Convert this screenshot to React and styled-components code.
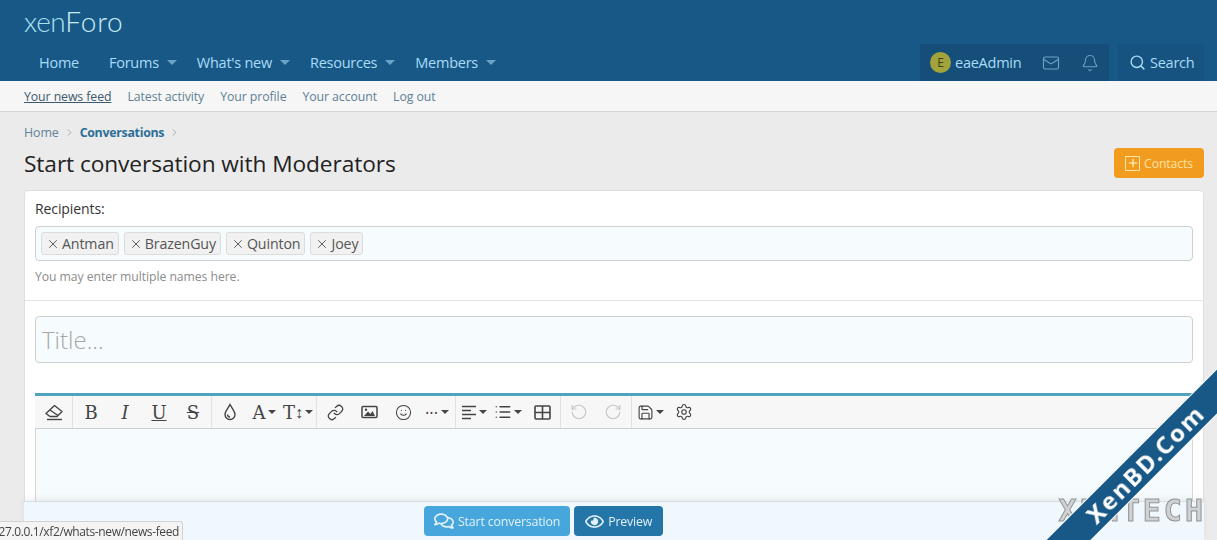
import { createGlobalStyle } from 'styled-components';
import styled from 'styled-components';
import {
    Mail, Bell, Search, Link, Smile, List,
    RotateCcw, RotateCw, Save, Settings, X, Plus, ChevronRight
} from 'lucide-react';
import { FaRegComments, FaRegEye } from 'react-icons/fa';

const GlobalStyle = createGlobalStyle`
    html, body {
        margin: 0;
        height: 100%;
        overflow: hidden;
    }
    body {
        background: #ebebeb;
        font-family: "Open Sans", "Liberation Sans", sans-serif;
        color: #222;
    }
`

const navItems = [
    { label: 'Home', caret: false },
    { label: 'Forums', caret: true },
    { label: "What's new", caret: true },
    { label: 'Resources', caret: true },
    { label: 'Members', caret: true },
]

const subItems = ['Your news feed', 'Latest activity', 'Your profile', 'Your account', 'Log out']
const recipients = ['Antman', 'BrazenGuy', 'Quinton', 'Joey']

const EraserIcon = () => (
    <svg width="20" height="18" viewBox="0 0 20 18" fill="none" stroke="#444" strokeWidth="1.4" strokeLinejoin="round">
        <path d="M2 10.5 L10.5 2.5 L18 8.5 L13 13.5 H6 Z" />
        <path d="M6 7 L14 12.5" />
        <path d="M3 16.5 H18" />
    </svg>
)

const DropIcon = () => (
    <svg width="16" height="18" viewBox="0 0 16 18" fill="none" stroke="#444" strokeWidth="1.4">
        <path d="M8 1.5 C6 5.5 3 8 3 11.5 A5 5 0 0 0 13 11.5 C13 8 10 5.5 8 1.5 Z" />
        <path d="M5.5 11.5 A2.6 2.6 0 0 0 8 14" />
    </svg>
)

const PictureIcon = () => (
    <svg width="17" height="14" viewBox="0 0 17 14" fill="none" stroke="#444" strokeWidth="1.5">
        <rect x="1" y="1.5" width="15" height="11" rx="1" />
        <path d="M3 11 L7 6.5 L9.5 9 L11.5 6 L14 11 Z" fill="#444" stroke="none" />
        <circle cx="5" cy="4.7" r="1.2" fill="#444" stroke="none" />
    </svg>
)

const AlignIcon = () => (
    <svg width="15" height="15" viewBox="0 0 15 15" stroke="#444" strokeWidth="1.5">
        <path d="M0 1.5 H14 M0 5.5 H9 M0 9.5 H14 M0 13.5 H9" />
    </svg>
)

const TableIcon = () => (
    <svg width="17" height="15" viewBox="0 0 17 15" fill="none" stroke="#444" strokeWidth="1.6">
        <rect x="1" y="1" width="15" height="13" rx="1" />
        <path d="M1 7.5 H16 M8.5 1 V14" />
    </svg>
)

const Header = () => {
    return (
        <HeaderWrapper>
            <LogoRow>
                <Logo>xen<b>Foro</b></Logo>
            </LogoRow>
            <NavRow>
                <NavList>
                    {navItems.map(item => (
                        <NavItem key={item.label} $first={!item.caret}>
                            {item.label}
                            {item.caret && <NavCaret />}
                        </NavItem>
                    ))}
                </NavList>
                <UserTools>
                    <UserGroup>
                        <UserLink>
                            <Avatar>E</Avatar>
                            eaeAdmin
                        </UserLink>
                        <ToolIcon><Mail size={18} strokeWidth={1.5} /></ToolIcon>
                        <ToolIcon><Bell size={18} strokeWidth={1.5} /></ToolIcon>
                    </UserGroup>
                    <SearchLink>
                        <Search size={17} strokeWidth={2} />
                        Search
                    </SearchLink>
                </UserTools>
            </NavRow>
        </HeaderWrapper>
    )
}

const SubNav = () => {
    return (
        <SubNavWrapper>
            {subItems.map((item, i) => (
                <SubNavLink key={item} $active={i === 0}>{item}</SubNavLink>
            ))}
        </SubNavWrapper>
    )
}

const TitleBar = () => {
    return (
        <TitleWrapper>
            <Breadcrumbs>
                <span>Home</span>
                <Chevron><ChevronRight size={11} strokeWidth={1.5} /></Chevron>
                <strong>Conversations</strong>
                <Chevron><ChevronRight size={11} strokeWidth={1.5} /></Chevron>
            </Breadcrumbs>
            <TitleRow>
                <PageTitle>Start conversation with Moderators</PageTitle>
                <ContactsButton>
                    <PlusBox><Plus size={12} strokeWidth={3} /></PlusBox>
                    Contacts
                </ContactsButton>
            </TitleRow>
        </TitleWrapper>
    )
}

const RecipientsRow = () => {
    return (
        <RecipientsWrapper>
            <Label>Recipients:</Label>
            <TokenInput>
                {recipients.map(name => (
                    <Token key={name}>
                        <X size={14} strokeWidth={1.6} />
                        {name}
                    </Token>
                ))}
            </TokenInput>
            <Hint>You may enter multiple names here.</Hint>
        </RecipientsWrapper>
    )
}

const Toolbar = () => {
    return (
        <ToolbarWrapper>
            <ToolButton><EraserIcon /></ToolButton>
            <Separator />
            <ToolButton><GlyphB>B</GlyphB></ToolButton>
            <ToolButton><GlyphI>I</GlyphI></ToolButton>
            <ToolButton><GlyphU>U</GlyphU></ToolButton>
            <ToolButton><GlyphS>S</GlyphS></ToolButton>
            <Separator />
            <ToolButton><DropIcon /></ToolButton>
            <ToolButton><GlyphB>A</GlyphB><MiniCaret /></ToolButton>
            <ToolButton><GlyphB>T</GlyphB><GlyphArrow>&#8597;</GlyphArrow><MiniCaret /></ToolButton>
            <Separator />
            <ToolButton><Link size={17} strokeWidth={1.7} /></ToolButton>
            <ToolButton><PictureIcon /></ToolButton>
            <ToolButton><Smile size={17} strokeWidth={1.5} /></ToolButton>
            <ToolButton><Dots>&#8226;&#8226;&#8226;</Dots><MiniCaret /></ToolButton>
            <Separator />
            <ToolButton><AlignIcon /><MiniCaret /></ToolButton>
            <ToolButton><List size={18} strokeWidth={1.8} /><MiniCaret /></ToolButton>
            <ToolButton><TableIcon /></ToolButton>
            <Separator />
            <ToolButton $disabled><RotateCcw size={18} strokeWidth={1.6} /></ToolButton>
            <ToolButton $disabled><RotateCw size={18} strokeWidth={1.6} /></ToolButton>
            <Separator />
            <ToolButton><Save size={17} strokeWidth={1.6} /><MiniCaret /></ToolButton>
            <ToolButton><Settings size={18} strokeWidth={1.5} /></ToolButton>
        </ToolbarWrapper>
    )
}

const FormBlock = () => {
    return (
        <Block>
            <RecipientsRow />
            <BodyWrapper>
                <TitleInput>Title...</TitleInput>
                <EditorWrapper>
                    <Toolbar />
                    <EditorArea />
                </EditorWrapper>
            </BodyWrapper>
        </Block>
    )
}

const StickyFooter = () => {
    return (
        <FooterBar>
            <SubmitButton>
                <FaRegComments size={20} />
                Start conversation
            </SubmitButton>
            <SubmitButton $dark>
                <FaRegEye size={19} />
                Preview
            </SubmitButton>
        </FooterBar>
    )
}

const App = () => {
    return (
        <>
            <GlobalStyle />
            <Header />
            <SubNav />
            <Content>
                <TitleBar />
                <FormBlock />
            </Content>
            <StickyFooter />
            <StatusBubble>27.0.0.1/xf2/whats-new/news-feed</StatusBubble>
            <Watermark>XENTECH</Watermark>
            <Ribbon>XenBD.Com</Ribbon>
        </>
    )
}

const HeaderWrapper = styled.header`
    background: #185886;
    height: 81px;
`

const LogoRow = styled.div`
    height: 44px;
    padding-left: 24px;
    display: flex;
    align-items: flex-start;
`

const Logo = styled.div`
    margin-top: 3px;
    font-family: "Lato", sans-serif;
    font-weight: 300;
    font-size: 28px;
    line-height: 36px;
    letter-spacing: -0.4px;
    color: #a8e2f0;

    b {
        font-weight: 300;
        color: #c9eef5;
        letter-spacing: 0.8px;
    }
`

const NavRow = styled.nav`
    height: 37px;
    display: flex;
    justify-content: space-between;
    padding: 0 13px 0 24px;
`

const NavList = styled.div`
    display: flex;
    align-items: center;
    font-size: 14.5px;
    letter-spacing: -0.25px;
    color: #a9dcf7;
`

const NavItem = styled.div`
    display: flex;
    align-items: center;
    margin-left: ${props => props.$first ? '15px' : '0'};
    margin-right: ${props => props.$first ? '30px' : '20px'};
`

const NavCaret = styled.i`
    width: 0;
    height: 0;
    margin-left: 8px;
    border-left: 5px solid transparent;
    border-right: 5px solid transparent;
    border-top: 5px solid #6ba3c8;
`

const UserTools = styled.div`
    display: flex;
    gap: 9px;
    font-size: 14.5px;
    letter-spacing: -0.25px;
    color: #a9dcf7;
`

const UserGroup = styled.div`
    width: 189px;
    display: flex;
    align-items: center;
    background: #154e78;
`

const UserLink = styled.div`
    width: 112px;
    padding-left: 10px;
    box-sizing: border-box;
    display: flex;
    align-items: center;
    gap: 4px;
`

const Avatar = styled.span`
    width: 21px;
    height: 21px;
    border-radius: 50%;
    background: #a3a33c;
    color: #3c3c20;
    font-size: 12px;
    display: flex;
    align-items: center;
    justify-content: center;
`

const ToolIcon = styled.span`
    width: 39px;
    display: flex;
    justify-content: center;
    color: #6aa2c8;
`

const SearchLink = styled.div`
    width: 86px;
    box-sizing: border-box;
    padding-left: 11px;
    display: flex;
    align-items: center;
    gap: 4px;
    background: #175380;
`

const SubNavWrapper = styled.div`
    height: 31px;
    box-sizing: border-box;
    padding-left: 24px;
    display: flex;
    align-items: center;
    gap: 16px;
    background: #f6f6f6;
    border-bottom: 1px solid #d4d4d4;
    font-size: 12.3px;
    letter-spacing: -0.08px;
`

const SubNavLink = styled.span`
    color: ${props => props.$active ? '#3d5a6c' : '#5f7f93'};
    text-decoration: ${props => props.$active ? 'underline' : 'none'};
`

const Content = styled.main`
    padding: 0 13px 0 24px;
`

const TitleWrapper = styled.div`
    padding-top: 11px;
    height: 78px;
    box-sizing: border-box;
`

const Breadcrumbs = styled.div`
    display: flex;
    align-items: center;
    height: 18px;
    font-size: 12.4px;
    letter-spacing: -0.1px;
    color: #5f8298;

    strong {
        color: #2c6f97;
        letter-spacing: -0.3px;
    }
`

const Chevron = styled.span`
    display: flex;
    margin: 0 5px;
    color: #8a8a8a;
`

const TitleRow = styled.div`
    display: flex;
    justify-content: space-between;
    align-items: center;
    height: 32px;
    margin-top: 6px;
`

const PageTitle = styled.h1`
    margin: 0;
    font-size: 22.7px;
    font-weight: 400;
    letter-spacing: -0.08px;
    color: #222;
`

const ContactsButton = styled.div`
    width: 90px;
    height: 30px;
    box-sizing: border-box;
    display: flex;
    align-items: center;
    justify-content: center;
    gap: 4px;
    background: #f29c1f;
    border-radius: 4px;
    font-size: 12.2px;
    letter-spacing: -0.1px;
    color: #fce3a8;
`

const PlusBox = styled.span`
    width: 15px;
    height: 15px;
    box-sizing: border-box;
    display: flex;
    align-items: center;
    justify-content: center;
    border: 1.5px solid #fce3a8;
`

const Block = styled.section`
    background: #fff;
    border: 1px solid #dfdfdf;
    border-radius: 4px;
`

const RecipientsWrapper = styled.div`
    padding: 9px 10px 15px;
    border-bottom: 1px solid #e4e4e4;
`

const Label = styled.div`
    font-size: 14px;
    line-height: 18px;
    letter-spacing: -0.1px;
    color: #333;
`

const TokenInput = styled.div`
    margin-top: 8px;
    height: 35px;
    box-sizing: border-box;
    padding: 0 5px;
    display: flex;
    align-items: center;
    gap: 5px;
    background: #f6fcfe;
    border: 1px solid #cfcfcf;
    border-radius: 4px;
`

const Token = styled.span`
    height: 23px;
    box-sizing: border-box;
    padding: 0 4px;
    display: flex;
    align-items: center;
    gap: 2px;
    background: #f1f1f1;
    border: 1px solid #dcdcdc;
    border-radius: 3px;
    font-size: 14.2px;
    letter-spacing: -0.12px;
    color: #555;
`

const Hint = styled.div`
    margin-top: 8px;
    font-size: 12.2px;
    line-height: 16px;
    letter-spacing: -0.05px;
    color: #8c8c8c;
`

const BodyWrapper = styled.div`
    padding: 15px 10px;
`

const TitleInput = styled.div`
    height: 47px;
    box-sizing: border-box;
    padding-left: 6px;
    display: flex;
    align-items: center;
    background: #f6fcfe;
    border: 1px solid #cfcfcf;
    border-radius: 4px;
    font-size: 24px;
    font-weight: 300;
    color: #a6a6a6;
`

const EditorWrapper = styled.div`
    margin-top: 30px;
    border-top: 3px solid #4fa3be;
`

const ToolbarWrapper = styled.div`
    height: 32px;
    padding-left: 2px;
    display: flex;
    align-items: stretch;
    background: #f7f7f7;
    border-bottom: 1px solid #cfcfcf;
`

const ToolButton = styled.div`
    width: 34px;
    flex-shrink: 0;
    display: flex;
    align-items: center;
    justify-content: center;
    color: ${props => props.$disabled ? '#c8c8c8' : '#444'};
`

const Separator = styled.div`
    width: 1px;
    margin: 0 1px;
    background: #e2e2e2;
`

const GlyphB = styled.span`
    font-family: "DejaVu Serif", serif;
    font-size: 18px;
    color: #444;
`

const GlyphI = styled(GlyphB)`
    font-style: italic;
`

const GlyphU = styled(GlyphB)`
    text-decoration: underline;
`

const GlyphS = styled(GlyphB)`
    text-decoration: line-through;
`

const GlyphArrow = styled.span`
    font-size: 16px;
    color: #444;
`

const Dots = styled.span`
    font-size: 9px;
    letter-spacing: 1px;
    color: #444;
`

const MiniCaret = styled.i`
    width: 0;
    height: 0;
    margin-left: 2px;
    border-left: 4px solid transparent;
    border-right: 4px solid transparent;
    border-top: 4px solid #444;
`

const EditorArea = styled.div`
    height: 160px;
    background: #f6fcfe;
    border: 1px solid #d6d6d6;
    border-top: none;
`

const FooterBar = styled.div`
    position: fixed;
    left: 24px;
    right: 13px;
    bottom: 0;
    height: 39px;
    display: flex;
    gap: 4px;
    padding: 4px 0 0 400px;
    box-sizing: border-box;
    background: #f0f8fd;
    border-top: 1px solid #d8dde0;
    box-shadow: 0 -3px 6px rgba(0, 0, 0, 0.06);
`

const SubmitButton = styled.div`
    height: 30px;
    box-sizing: border-box;
    padding: 0 ${props => props.$dark ? '11px' : '10px'};
    display: flex;
    align-items: center;
    gap: 4px;
    border-radius: 4px;
    background: ${props => props.$dark ? '#2576a8' : '#47a6db'};
    color: #e3f1fa;
    font-size: 12.4px;
    letter-spacing: -0.18px;
`

const StatusBubble = styled.div`
    position: fixed;
    left: 0;
    bottom: 0;
    width: 183px;
    height: 19px;
    box-sizing: border-box;
    display: flex;
    justify-content: flex-end;
    align-items: center;
    padding-right: 3px;
    white-space: nowrap;
    background: #f4f4f4;
    border: 1px solid #d2d2d2;
    border-left: none;
    border-bottom: none;
    border-top-right-radius: 3px;
    font-size: 12px;
    letter-spacing: -0.38px;
    color: #444;
`

const Watermark = styled.div`
    position: fixed;
    right: 11px;
    bottom: 16px;
    font-family: "DejaVu Sans Mono", monospace;
    font-weight: 700;
    font-size: 30px;
    line-height: 27px;
    letter-spacing: 3px;
    color: #cfd1d3;
    -webkit-text-stroke: 1px #939698;
`

const Ribbon = styled.div`
    position: fixed;
    left: 1005px;
    top: 447px;
    width: 280px;
    height: 31px;
    display: flex;
    align-items: center;
    justify-content: center;
    transform: rotate(-45deg);
    background: #185886;
    border-top: 1px solid #fff;
    border-bottom: 1px solid #fff;
    font-family: "Noto Sans", sans-serif;
    font-weight: 700;
    font-size: 24px;
    letter-spacing: 2px;
    color: #fff;
`

export default App;
